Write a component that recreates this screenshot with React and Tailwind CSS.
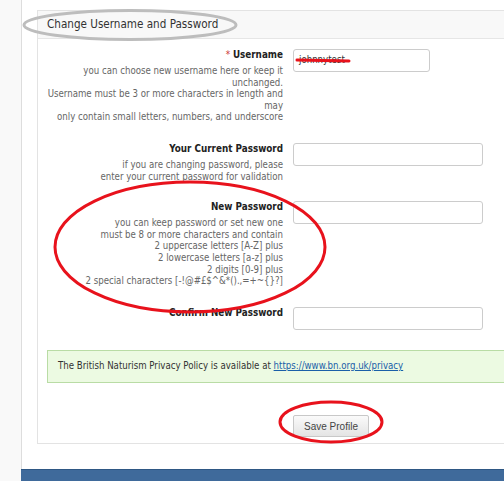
export default function App() {
  const font = { fontFamily: '"DejaVu Sans Condensed", "Liberation Sans", sans-serif' };
  return (
    <div className="w-[504px] h-[481px] overflow-hidden flex bg-white relative" style={font}>
      <div className="w-[22px] shrink-0 bg-[#f9f9f9] border-r border-[#dddddd]" />
      <div className="flex-1 flex flex-col min-w-0">
        <div className="pl-[15px] pt-[10px] h-[469px] shrink-0">
          <div className="w-[500px] h-[434px] border border-[#e3e3e3] flex flex-col">
            <div className="h-[28px] shrink-0 bg-[#f8f8f8] border-b border-[#e6e6e6] pl-[9px] flex items-center text-[11.6px] text-[#333333]">
              Change Username and Password
            </div>
            <div className="flex flex-col pt-[10px]">
              <Row
                label={<><span className="text-[#cc3333] font-normal">* </span>Username</>}
                desc={[
                  'you can choose new username here or keep it',
                  'unchanged.',
                  'Username must be 3 or more characters in length and',
                  'may',
                  'only contain small letters, numbers, and underscore',
                ]}
                inputW="w-[137px]"
                value="johnnytest"
                mb="mb-[20px]"
              />
              <Row
                label="Your Current Password"
                desc={['if you are changing password, please', 'enter your current password for validation']}
                inputW="w-[190px]"
                mb="mb-[19px]"
              />
              <Row
                label="New Password"
                desc={[
                  'you can keep password or set new one',
                  'must be 8 or more characters and contain',
                  '2 uppercase letters [A-Z] plus',
                  '2 lowercase letters [a-z] plus',
                  '2 digits [0-9] plus',
                  '2 special characters [-!@#£$^&*().,=+~{}?]',
                ]}
                inputW="w-[190px]"
                mb="mb-[20px]"
              />
              <Row label="Confirm New Password" desc={[]} inputW="w-[190px]" mb="mb-[20px]" />
            </div>
            <div className="ml-[9px] h-[33px] shrink-0 border border-[#b9dca5] bg-[#ecfae2] flex items-center pl-[10px] text-[9.6px] text-[#333333] whitespace-nowrap">
              The British Naturism Privacy Policy is available at&nbsp;
              <a className="text-[#1a5fa8] underline" href="#">https://www.bn.org.uk/privacy</a>
            </div>
            <div className="pl-[255px] pt-[30px]">
              <button
                className="w-[76px] h-[22px] border border-[#c8c8c8] rounded-[2px] bg-gradient-to-b from-[#fafafa] to-[#e4e4e4] text-[10px] text-[#444444]"
                style={{ fontFamily: '"Liberation Sans", Arial, sans-serif' }}
              >
                Save Profile
              </button>
            </div>
          </div>
        </div>
        <div className="flex-1 -ml-[1px] bg-[#3f6a9b] border-t border-[#2e5784]" />
      </div>

      <svg className="absolute left-0 top-0 pointer-events-none" width="504" height="481">
        <ellipse cx="130" cy="25" rx="106" ry="14.5" fill="none" stroke="#bdbdbd" strokeWidth="3" />
        <ellipse cx="190" cy="247" rx="135" ry="65" fill="none" stroke="#e8121c" strokeWidth="3" />
        <ellipse cx="331" cy="422" rx="51" ry="20" fill="none" stroke="#e8121c" strokeWidth="3" />
        <line x1="297" y1="60" x2="349" y2="61" stroke="#e8121c" strokeWidth="3" strokeLinecap="round" />
      </svg>
    </div>
  );
}

function Row({ label, desc, inputW, value, mb }) {
  return (
    <div className={`flex items-start ${mb}`}>
      <div className="w-[245px] shrink-0 text-right whitespace-nowrap">
        <div className="text-[9.8px] leading-[12px] font-bold text-[#222222]">{label}</div>
        {desc.length > 0 && (
          <div className="mt-[4px] text-[9.6px] leading-[11.6px] text-[#666666]">
            {desc.map((d, i) => (
              <div key={i}>{d}</div>
            ))}
          </div>
        )}
      </div>
      <div className="ml-[10px]">
        <div className={`${inputW} h-[23px] border border-[#cccccc] rounded-[3px] bg-white flex items-center pl-[5px] text-[9.6px] text-[#333333]`}>
          {value}
        </div>
      </div>
    </div>
  );
}
